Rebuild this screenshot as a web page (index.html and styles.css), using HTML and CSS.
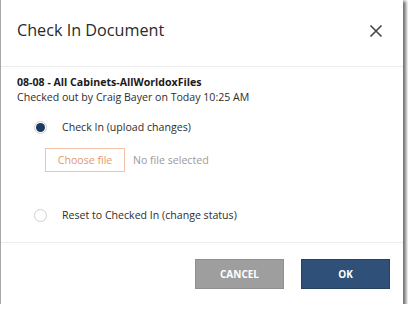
FILE: index.html
```html
<!DOCTYPE html>
<html>
<head>
<meta charset="utf-8">
<link rel="stylesheet" href="styles.css">
</head>
<body>
<div class="dialog">
  <div class="header">
    <div class="title">Check In Document</div>
    <svg class="close" width="14" height="14" viewBox="0 0 14 14"><path d="M1.5 1.5 L12.5 12.5 M12.5 1.5 L1.5 12.5" stroke="#444" stroke-width="1.6" fill="none"/></svg>
  </div>
  <div class="body">
    <div class="docname">08-08 - All Cabinets-AllWorldoxFiles</div>
    <div class="meta">Checked out by Craig Bayer on Today 10:25 AM</div>
    <div class="option first">
      <span class="radio checked"></span>
      <span class="label">Check In (upload changes)</span>
    </div>
    <div class="file-row">
      <span class="choose">Choose file</span>
      <span class="nofile">No file selected</span>
    </div>
    <div class="option second">
      <span class="radio"></span>
      <span class="label">Reset to Checked In (change status)</span>
    </div>
  </div>
  <div class="footer">
    <span class="btn cancel">CANCEL</span>
    <span class="btn ok">OK</span>
  </div>
</div>
</body>
</html>
```
FILE: styles.css
```css
html, body {
  margin: 0;
  padding: 0;
  background: #ffffff;
}
body {
  font-family: "Open Sans", "DejaVu Sans", sans-serif;
  color: #333;
}
.dialog {
  width: 403px;
  height: 304px;
  box-sizing: border-box;
  border-left: 1px solid #a8a8a8;
  background: #fff;
  display: flex;
  flex-direction: column;
  box-shadow: 2px 2px 3px 1px rgba(0,0,0,0.55);
}
.header {
  height: 67px;
  box-sizing: border-box;
  border-bottom: 1px solid #ececec;
  display: flex;
  align-items: flex-start;
  justify-content: space-between;
  padding: 19px 20px 0 16px;
}
.title {
  font-size: 16.2px;
  line-height: 22px;
  color: #2a2a2a;
}
.close {
  margin-top: 5px;
}
.body {
  flex: 1;
  padding: 8px 16px 0 16px;
  font-size: 10.6px;
  line-height: 15px;
}
.docname {
  font-weight: 700;
  color: #1a1a1a;
}
.meta {
  color: #2e2e2e;
}
.option {
  display: flex;
  align-items: center;
  height: 20px;
  gap: 15px;
  color: #2e2e2e;
}
.option.first { margin-top: 12px; }
.option.second { margin-top: 33px; }
.radio {
  width: 11px;
  height: 11px;
  border: 1px solid #cfcfcf;
  border-radius: 50%;
  margin-left: 17px;
  display: flex;
  align-items: center;
  justify-content: center;
  box-sizing: content-box;
}
.radio.checked::after {
  content: "";
  width: 9px;
  height: 9px;
  border-radius: 50%;
  background: #1d3a5e;
}
.file-row {
  display: flex;
  align-items: center;
  margin-top: 11px;
  margin-left: 28px;
  gap: 8px;
}
.choose {
  width: 80px;
  height: 24px;
  box-sizing: border-box;
  border: 1px solid #f1c2a6;
  color: #e2996c;
  display: flex;
  align-items: center;
  justify-content: center;
}
.nofile {
  color: #9a9a9a;
}
.footer {
  height: 62px;
  box-sizing: border-box;
  border-top: 1px solid #ececec;
  display: flex;
  justify-content: flex-end;
  align-items: flex-start;
  padding: 16px 13px 0 0;
  gap: 17px;
}
.btn {
  width: 89px;
  height: 30px;
  box-sizing: border-box;
  display: flex;
  align-items: center;
  justify-content: center;
  color: #fff;
  font-weight: 700;
  font-size: 10px;
}
.cancel {
  background: #9e9e9e;
  border: 1px solid #8f8f8f;
}
.ok {
  background: #2f5078;
  border: 1px solid #254263;
}
```
